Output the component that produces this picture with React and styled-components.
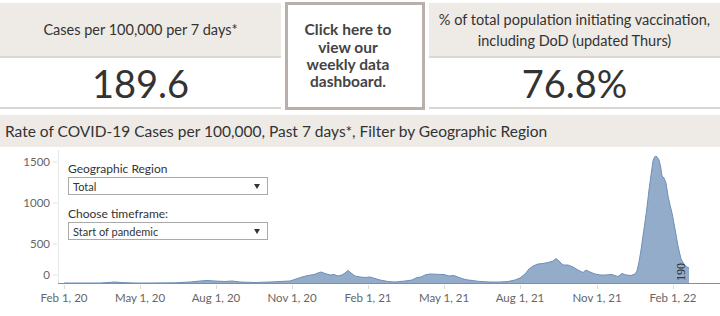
import React from "react";
import styled, { createGlobalStyle } from "styled-components";

const GlobalStyle = createGlobalStyle`
  html, body { margin: 0; padding: 0; background: #fff; }
  body { font-family: Lato, "Open Sans", sans-serif; color: #333; }
`;

const Page = styled.div`
  width: 720px;
  height: 316px;
  overflow: hidden;
  display: flex;
  flex-direction: column;
`;

const TopRow = styled.div`
  display: flex;
  height: 112px;
  gap: 4px;
`;

const KpiPanel = styled.div`
  width: ${(p) => (p.$w ? `${p.$w}px` : "auto")};
  flex: ${(p) => (p.$w ? "none" : "1")};
  padding-top: 3px;
  display: flex;
  flex-direction: column;
`;

const KpiHeader = styled.div`
  height: 53px;
  background: #eeeae6;
  border-bottom: 2px solid #dbd7d3;
  display: flex;
  align-items: center;
  justify-content: center;
  text-align: center;
  font-size: 14.5px;
  line-height: 21px;
  color: #333;
`;

const KpiValue = styled.div`
  height: 49px;
  border-bottom: 2px solid #dbd7d3;
  display: flex;
  align-items: center;
  justify-content: center;
  font-size: 38px;
  color: #333;
`;

const LinkBox = styled.a`
  box-sizing: border-box;
  margin-top: 2px;
  width: 140px;
  height: 108px;
  border: 3px solid #b9b0ab;
  display: flex;
  align-items: center;
  justify-content: center;
  padding-right: 14px;
  text-align: center;
  font-weight: 700;
  font-size: 15.5px;
  line-height: 17.3px;
  color: #444;
  text-decoration: none;
  cursor: pointer;
`;

const TitleBar = styled.div`
  margin-top: 3px;
  height: 32px;
  background: #eeeae6;
  display: flex;
  align-items: center;
  padding-left: 5px;
  font-size: 15.5px;
  color: #333;
`;

const ChartArea = styled.div`
  position: relative;
  height: 169px;
`;

const Filters = styled.div`
  position: absolute;
  left: 68px;
  top: 14px;
  width: 200px;
  display: flex;
  flex-direction: column;
`;

const FilterLabel = styled.div`
  font-size: 12px;
  line-height: 16px;
  color: #333;
  margin-top: ${(p) => (p.$first ? "0" : "11px")};
`;

const Select = styled.div`
  box-sizing: border-box;
  height: 18px;
  border: 1px solid #aaa;
  background: #fff;
  display: flex;
  align-items: center;
  justify-content: space-between;
  padding: 0 7px 0 4px;
  font-size: 11px;
  color: #333;
`;

const Caret = styled.span`
  width: 0;
  height: 0;
  border-left: 3.5px solid transparent;
  border-right: 3.5px solid transparent;
  border-top: 5px solid #333;
`;

const pts = [
  [64, 283], [100, 283], [108, 282.5], [115, 282], [122, 282.6], [135, 283], [150, 283],
  [175, 282.8], [190, 282], [200, 281], [207, 280.5], [215, 281], [225, 281.5], [232, 281],
  [240, 282], [255, 282.5], [270, 282], [280, 281.5], [290, 281], [296, 279], [302, 277],
  [308, 275.5], [314, 274.5], [318, 273], [321, 272], [325, 273.5], [330, 275], [334, 274.5],
  [338, 276], [342, 275], [345, 273], [348, 270.5], [351, 273], [355, 276], [360, 277],
  [365, 277.5], [370, 277], [375, 278.5], [380, 280], [388, 281.5], [395, 282], [405, 281],
  [412, 280], [417, 277.5], [421, 277], [425, 275], [430, 274], [437, 274.3], [444, 274.5],
  [449, 276], [454, 275.5], [459, 277.5], [465, 279.5], [472, 280.5], [480, 281.5], [490, 282],
  [500, 282], [508, 281.5], [515, 280], [520, 278], [525, 274], [529, 269], [533, 266],
  [538, 264], [543, 263.5], [548, 262.5], [553, 261], [556, 258.5], [559, 261], [563, 265],
  [568, 265], [573, 267], [578, 270], [583, 272.5], [586, 270], [590, 272], [595, 274],
  [600, 275], [605, 275], [612, 274.5], [616, 276], [618, 276.5], [622, 273.5], [626, 275],
  [631, 275.5], [635, 274], [637, 271], [639, 262], [641, 250], [643, 236], [645, 222],
  [647, 207], [649, 190], [651, 175], [653, 161], [654.5, 157], [656, 156], [657.5, 157.5],
  [659, 160], [660.5, 166], [662, 176], [664, 178], [666, 183], [668, 196], [670, 205],
  [672, 213], [675, 229], [678, 246], [681, 259], [684, 264], [686, 266.5], [689, 268],
];

const areaD =
  `M64,283 ` + pts.map(([x, y]) => `L${x},${y}`).join(" ") + ` L689,283 Z`;
const lineD = `M` + pts.map(([x, y]) => `${x},${y}`).join(" L");

const yTicks = [
  { label: "1500", y: 162 },
  { label: "1000", y: 203 },
  { label: "500", y: 244 },
  { label: "0", y: 275 },
];

const xTicks = [
  { label: "Feb 1, 20", x: 64 },
  { label: "May 1, 20", x: 140 },
  { label: "Aug 1, 20", x: 216 },
  { label: "Nov 1, 20", x: 292 },
  { label: "Feb 1, 21", x: 368 },
  { label: "May 1, 21", x: 444 },
  { label: "Aug 1, 21", x: 520 },
  { label: "Nov 1, 21", x: 597 },
  { label: "Feb 1, 22", x: 673 },
];

const ChartSvg = styled.svg`
  display: block;
  font-family: Lato, "Open Sans", sans-serif;
`;

function CasesChart() {
  return (
    <ChartSvg width="720" height="169" viewBox="0 147 720 169">
      <line x1="58.5" y1="150" x2="58.5" y2="283" stroke="#e8e8e8" strokeWidth="1" />
      {yTicks.map((t) => (
        <g key={t.label}>
          <text x="50" y={t.y + 4} textAnchor="end" fontSize="11.5" fill="#666">
            {t.label}
          </text>
          <line x1="53" y1={t.y} x2="57" y2={t.y} stroke="#e0e0e0" />
        </g>
      ))}
      <path d={areaD} fill="#93acca" />
      <path d={lineD} fill="none" stroke="#6f8fb8" strokeWidth="1" />
      <line x1="58" y1="283.5" x2="720" y2="283.5" stroke="#8c8c8c" strokeWidth="1" />
      {xTicks.map((t) => (
        <g key={t.label}>
          <line x1={t.x + 0.5} y1="285" x2={t.x + 0.5} y2="289" stroke="#dcdcdc" />
          <text x={t.x} y="302" textAnchor="middle" fontSize="11.5" fill="#666">
            {t.label}
          </text>
        </g>
      ))}
      <text
        x="0"
        y="0"
        transform="translate(684.5 272) rotate(-90)"
        textAnchor="middle"
        fontSize="12"
        fontFamily="'Liberation Serif', serif"
        fill="#222"
      >
        190
      </text>
    </ChartSvg>
  );
}

export default function App() {
  return (
    <Page>
      <GlobalStyle />
      <TopRow>
        <KpiPanel $w={281}>
          <KpiHeader>Cases per 100,000 per 7 days*</KpiHeader>
          <KpiValue>189.6</KpiValue>
        </KpiPanel>
        <LinkBox>
          <span>
            Click here to
            <br />
            view our
            <br />
            weekly data
            <br />
            dashboard.
          </span>
        </LinkBox>
        <KpiPanel>
          <KpiHeader>
            % of total population initiating vaccination,
            <br />
            including DoD (updated Thurs)
          </KpiHeader>
          <KpiValue>76.8%</KpiValue>
        </KpiPanel>
      </TopRow>
      <TitleBar>
        Rate of COVID-19 Cases per 100,000, Past 7 days*, Filter by Geographic Region
      </TitleBar>
      <ChartArea>
        <CasesChart />
        <Filters>
          <FilterLabel $first>Geographic Region</FilterLabel>
          <Select>
            <span>Total</span>
            <Caret />
          </Select>
          <FilterLabel>Choose timeframe:</FilterLabel>
          <Select>
            <span>Start of pandemic</span>
            <Caret />
          </Select>
        </Filters>
      </ChartArea>
    </Page>
  );
}
